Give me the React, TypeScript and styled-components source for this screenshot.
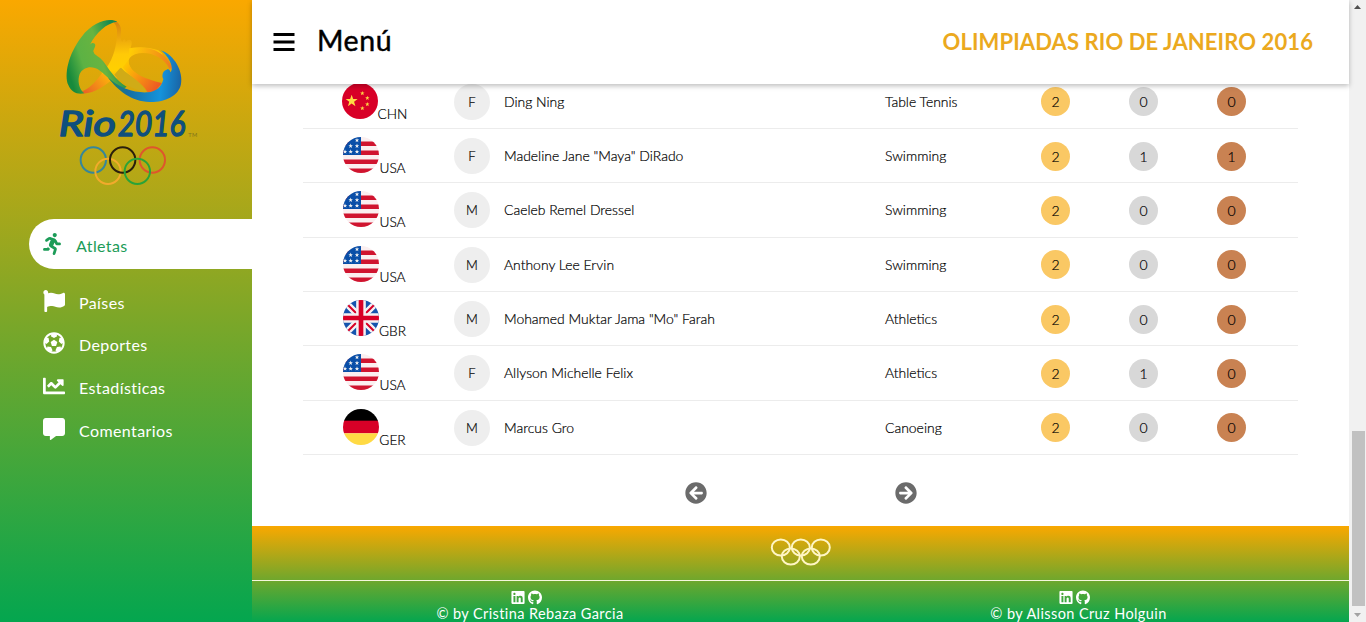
import React from "react";
import styled, { createGlobalStyle, css } from "styled-components";
import {
  FaRunning,
  FaFlag,
  FaFutbol,
  FaChartLine,
  FaCommentAlt,
  FaArrowCircleLeft,
  FaArrowCircleRight,
  FaLinkedin,
  FaGithub,
} from "react-icons/fa";

const GlobalStyle = createGlobalStyle`
  * { box-sizing: border-box; }
  body {
    margin: 0;
    overflow: hidden;
    background: #fff;
    font-family: Lato, "Open Sans", sans-serif;
  }
`;

const Page = styled.div`
  display: flex;
  width: 1366px;
  height: 622px;
  overflow: hidden;
`;

const Sidebar = styled.aside`
  flex: 0 0 252px;
  background: linear-gradient(#faa800, #04a64f);
`;

const LogoBox = styled.div`
  height: 219px;
  padding: 5px 0 0 40px;
`;

const NavList = styled.nav`
  display: flex;
  flex-direction: column;
`;

const NavItem = styled.a<{ $active?: boolean }>`
  display: flex;
  align-items: center;
  height: 42.6px;
  padding-left: 43px;
  color: #fff;
  font-size: 16px;
  letter-spacing: 0.4px;

  svg {
    width: 22px;
    height: 22px;
    margin-right: 14px;
  }

  span {
    padding-top: 3px;
  }

  ${(p) =>
    p.$active &&
    css`
      height: 50px;
      margin: 0 0 10.6px 29px;
      padding-left: 14px;
      border-radius: 25px 0 0 25px;
      background: #fff;
      color: #1c9c58;

      svg {
        width: 18px;
        margin-right: 15px;
      }
    `}
`;

const Main = styled.div`
  flex: 1;
  display: flex;
  flex-direction: column;
  min-width: 0;
`;

const Header = styled.header`
  position: relative;
  z-index: 1;
  flex: 0 0 84px;
  display: flex;
  align-items: center;
  padding: 0 36px 0 21px;
  background: #fff;
  box-shadow: 0 2px 5px rgba(0, 0, 0, 0.26);
`;

const MenuTitle = styled.h1`
  flex: 1;
  margin: 0 0 5px 22px;
  font-size: 28.5px;
  font-weight: 400;
  line-height: 36px;
  letter-spacing: 0.6px;
  color: #000;
  -webkit-text-stroke: 0.45px #000;
`;

const EventTitle = styled.h2`
  margin: 0 0 2px;
  font-size: 22px;
  font-weight: 700;
  letter-spacing: 0.1px;
  color: #eba91e;
`;

const Table = styled.div`
  flex: 0 0 auto;
  margin: -9.35px 51px 0;
`;

const Row = styled.div`
  display: grid;
  grid-template-columns: 143px 52px 1fr 132.5px repeat(3, 88px) 22.5px;
  align-items: center;
  height: 54.33px;
  padding-top: 1px;
  border-bottom: 1px solid #ececec;
  font-size: 14px;
  font-weight: 300;
  color: #000;
  -webkit-text-stroke: 0.2px #000;
`;

const Country = styled.div`
  display: flex;
  justify-content: center;
  align-items: flex-end;
  font-size: 13.7px;

  svg {
    width: 36px;
    height: 36px;
    margin-bottom: 2px;
  }

  span {
    line-height: 17px;
    margin-bottom: -1px;
  }
`;

const Gender = styled.div`
  display: grid;
  place-items: center;
  width: 36px;
  height: 36px;
  margin: 0 auto;
  border-radius: 50%;
  background: #eee;
  font-size: 13px;
`;

const Cell = styled.div`
  padding: 0 0 1px 6px;
  font-size: 13.95px;
  white-space: nowrap;
`;

const medalColors = { gold: "#fac864", silver: "#d8d8d8", bronze: "#c98252" };

const Medal = styled.div<{ $kind: keyof typeof medalColors }>`
  display: grid;
  place-items: center;
  width: 29px;
  height: 29px;
  margin: 0 auto;
  border-radius: 50%;
  background: ${(p) => medalColors[p.$kind]};
  font-size: 14px;
`;

const Pager = styled.div`
  flex: 1;
  display: flex;
  justify-content: center;
  align-items: center;
  gap: 188px;
  padding-top: 5px;
  color: #6b6b6b;

  svg {
    width: 22px;
    height: 22px;
  }
`;

const Footer = styled.footer`
  flex: 0 0 96px;
  overflow: hidden;
  background: linear-gradient(#faa800, #04a64f);
  color: #fff;
`;

const RingsStrip = styled.div`
  height: 55px;
  padding-top: 12px;
  border-bottom: 1px solid #f5f7dc;
  text-align: center;
`;

const Credits = styled.div`
  display: grid;
  grid-template-columns: 556px 1fr;
`;

const Credit = styled.div`
  display: flex;
  flex-direction: column;
  align-items: center;
  padding-top: 9px;
  font-size: 14.5px;
  line-height: 18px;
  letter-spacing: 0.4px;
  white-space: nowrap;
`;

const Social = styled.div`
  display: flex;
  align-items: center;
  gap: 3px;
  height: 15px;
  margin-right: 8px;

  svg {
    width: 14px;
    height: 15px;
  }
`;

const Scrollbar = styled.div`
  flex: 0 0 17px;
  display: flex;
  flex-direction: column;
  align-items: center;
  justify-content: space-between;
  background: #f1f1f1;
`;

const Thumb = styled.div`
  width: 13px;
  height: 175px;
  margin: auto 0 0 1px;
  background: #c1c1c1;
`;

const ScrollArrow = styled.svg`
  display: block;
  width: 17px;
  height: 16px;
`;

function RioLogo() {
  return (
    <svg width="180" height="190" viewBox="0 0 540 570">
      <defs>
        <linearGradient id="leaf" x1="85" y1="200" x2="240" y2="150" gradientUnits="userSpaceOnUse">
          <stop offset="0" stopColor="#178a3c" />
          <stop offset="0.3" stopColor="#5cb244" />
          <stop offset="0.65" stopColor="#68b440" />
          <stop offset="1" stopColor="#188b50" />
        </linearGradient>
        <linearGradient id="sun" x1="240" y1="50" x2="245" y2="245" gradientUnits="userSpaceOnUse">
          <stop offset="0" stopColor="#d98410" />
          <stop offset="0.5" stopColor="#ffc907" />
          <stop offset="0.75" stopColor="#ffd000" />
          <stop offset="1" stopColor="#f48a20" />
        </linearGradient>
        <linearGradient id="flame" x1="250" y1="180" x2="350" y2="250" gradientUnits="userSpaceOnUse">
          <stop offset="0" stopColor="#ffc800" />
          <stop offset="1" stopColor="#ee5a24" />
        </linearGradient>
        <linearGradient id="tail" x1="135" y1="265" x2="215" y2="200" gradientUnits="userSpaceOnUse">
          <stop offset="0" stopColor="#ea6325" />
          <stop offset="1" stopColor="#ffc107" />
        </linearGradient>
        <linearGradient id="arc" x1="275" y1="130" x2="395" y2="170" gradientUnits="userSpaceOnUse">
          <stop offset="0" stopColor="#ffcb05" />
          <stop offset="1" stopColor="#ef7d1d" />
        </linearGradient>
        <linearGradient id="sea" x1="200" y1="210" x2="420" y2="230" gradientUnits="userSpaceOnUse">
          <stop offset="0" stopColor="#238f4f" />
          <stop offset="0.3" stopColor="#176da0" />
          <stop offset="0.75" stopColor="#1493dc" />
          <stop offset="1" stopColor="#1a67a8" />
        </linearGradient>
      </defs>
      <path fill="url(#tail)" d="M120 262C150 250 165 232 187 203L220 222C195 240 170 264 128 266Z" />
      <path
        fill="url(#sun)"
        d="M205 45C232 42 244 60 243 78C242 92 240 101 247 111C250 100 258 100 257 112C266 99 277 105 275 116L272 129C300 125 330 127 355 136L370 149C330 133 275 137 266 166C264 180 271 194 288 206L300 222L240 222C222 216 200 210 184 204C216 181 233 120 231 76C229 57 222 50 205 45Z"
      />
      <path fill="#d0ab17" d="M223 209C232 198 238 190 243 188C260 205 278 216 290 222L322 261C285 256 245 235 223 209Z" />
      <path fill="url(#flame)" d="M265 165C268 205 315 222 366 234L345 260L322 261C310 235 264 212 248 187Z" />
      <path fill="url(#arc)" d="M268 130C320 122 375 134 398 190L388 191C369 146 297 128 266 160Z" />
      <path
        fill="url(#leaf)"
        d="M232 50C207 37 160 50 125 95C84 148 72 211 85 240C93 261 111 269 133 265C116 253 112 225 119 207C130 184 158 181 177 195C203 214 225 244 249 253L260 245C229 229 204 188 189 168C178 154 163 151 161 141C158 137 165 130 166 120C165 113 155 111 150 119C168 82 200 54 232 50Z"
      />
      <path
        fill="url(#sea)"
        d="M362 136C405 150 430 202 423 237C416 274 373 292 329 291C274 290 234 257 203 217C239 250 282 264 322 262C350 261 366 243 370 222C364 211 369 196 380 194C386 190 391 196 391 202C403 194 390 156 362 136Z"
      />
      <g
        fontFamily="Lato"
        fontWeight="400"
        fontStyle="italic"
        fontSize="106"
        fill="#0f4f7c"
        stroke="#0f4f7c"
        strokeWidth="4.5"
        strokeLinejoin="round"
      >
        <text x="56" y="392" textLength="172" lengthAdjust="spacingAndGlyphs">
          Rio
        </text>
        <text x="233" y="392" textLength="203" lengthAdjust="spacingAndGlyphs">
          2016
        </text>
      </g>
      <text x="445" y="397" fontFamily="Lato" fontSize="17" fill="#80751c" textLength="27">
        TM
      </text>
      <g fill="none" strokeWidth="6">
        <circle cx="160" cy="465" r="38" stroke="#36869a" />
        <circle cx="337" cy="465" r="38" stroke="#de562c" />
        <circle cx="204" cy="499" r="38" stroke="#f2aa2c" />
        <circle cx="248" cy="465" r="38" stroke="#2a1f0c" />
        <circle cx="292" cy="499" r="38" stroke="#2aa338" />
      </g>
    </svg>
  );
}

const STAR = "M0-10L2.4-3.2L9.5-3.1L3.8 1.2L5.9 8.1L0 4L-5.9 8.1L-3.8 1.2L-9.5-3.1L-2.4-3.2Z";

function FlagIcon({ code }: { code: string }) {
  const clip = React.useId();
  return (
    <svg viewBox="0 0 108 108">
      <clipPath id={clip}>
        <circle cx="54" cy="54" r="54" />
      </clipPath>
      <g clipPath={`url(#${clip})`}>
        {code === "CHN" && (
          <>
            <rect width="108" height="108" fill="#d80027" />
            <path d={STAR} fill="#ffda44" transform="translate(29 54) scale(1.9)" />
            {[
              [61, 31],
              [76, 45],
              [76, 64],
              [61, 76],
            ].map(([x, y]) => (
              <path key={`${x}-${y}`} d={STAR} fill="#ffda44" transform={`translate(${x} ${y}) scale(.7)`} />
            ))}
          </>
        )}
        {code === "USA" && (
          <>
            <rect width="108" height="108" fill="#fbeff0" />
            {[13.5, 40.5, 67.5, 94.5].map((y) => (
              <rect key={y} y={y} width="108" height="13.5" fill="#d0142f" />
            ))}
            <rect width="54" height="54" fill="#0a4fa8" />
            {[
              [42, 10],
              [23, 27],
              [42, 27],
              [6, 44],
              [23, 44],
              [42, 44],
            ].map(([x, y]) => (
              <path key={`${x}-${y}`} d={STAR} fill="#f0f0f0" transform={`translate(${x} ${y}) scale(.72)`} />
            ))}
          </>
        )}
        {code === "GBR" && (
          <>
            <rect width="108" height="108" fill="#1554ae" />
            <path d="M0 0L108 108M108 0L0 108" stroke="#f5f0f2" strokeWidth="20" />
            <path d="M0 0L108 108M108 0L0 108" stroke="#d80027" strokeWidth="6" />
            <path d="M54 0V108M0 54H108" stroke="#f5f0f2" strokeWidth="29" />
            <path d="M54 0V108M0 54H108" stroke="#d80027" strokeWidth="14" />
          </>
        )}
        {code === "GER" && (
          <>
            <rect width="108" height="36" fill="#000" />
            <rect y="35" width="108" height="38" fill="#d80027" />
            <rect y="73" width="108" height="35" fill="#ffda44" />
          </>
        )}
      </g>
    </svg>
  );
}

function FooterRings() {
  return (
    <svg width="62" height="29" viewBox="0 0 62 29" fill="none" stroke="#fff6c4" strokeWidth="2">
      <ellipse cx="10.8" cy="9.5" rx="9" ry="8" />
      <ellipse cx="30.8" cy="9.5" rx="9" ry="8" />
      <ellipse cx="50.8" cy="9.5" rx="9" ry="8" />
      <ellipse cx="20.8" cy="18.5" rx="9" ry="8" />
      <ellipse cx="40.8" cy="18.5" rx="9" ry="8" />
    </svg>
  );
}

const athletes = [
  { code: "CHN", gender: "F", name: "Ding Ning", sport: "Table Tennis", medals: [2, 0, 0] },
  { code: "USA", gender: "F", name: 'Madeline Jane "Maya" DiRado', sport: "Swimming", medals: [2, 1, 1] },
  { code: "USA", gender: "M", name: "Caeleb Remel Dressel", sport: "Swimming", medals: [2, 0, 0] },
  { code: "USA", gender: "M", name: "Anthony Lee Ervin", sport: "Swimming", medals: [2, 0, 0] },
  { code: "GBR", gender: "M", name: 'Mohamed Muktar Jama "Mo" Farah', sport: "Athletics", medals: [2, 0, 0] },
  { code: "USA", gender: "F", name: "Allyson Michelle Felix", sport: "Athletics", medals: [2, 1, 0] },
  { code: "GER", gender: "M", name: "Marcus Gro", sport: "Canoeing", medals: [2, 0, 0] },
];

const authors = ["Cristina Rebaza Garcia", "Alisson Cruz Holguin"];

export default function App() {
  return (
    <Page>
      <GlobalStyle />
      <Sidebar>
        <LogoBox>
          <RioLogo />
        </LogoBox>
        <NavList>
          <NavItem $active>
            <FaRunning />
            <span>Atletas</span>
          </NavItem>
          <NavItem>
            <FaFlag />
            <span>Países</span>
          </NavItem>
          <NavItem>
            <FaFutbol />
            <span>Deportes</span>
          </NavItem>
          <NavItem>
            <FaChartLine />
            <span>Estadísticas</span>
          </NavItem>
          <NavItem>
            <FaCommentAlt />
            <span>Comentarios</span>
          </NavItem>
        </NavList>
      </Sidebar>
      <Main>
        <Header>
          <svg width="22" height="20" viewBox="0 0 22 20">
            <path d="M0.5 2.5H21.5M0.5 10H21.5M0.5 17.5H21.5" stroke="#000" strokeWidth="2.8" />
          </svg>
          <MenuTitle>Menú</MenuTitle>
          <EventTitle>OLIMPIADAS RIO DE JANEIRO 2016</EventTitle>
        </Header>
        <Table>
          {athletes.map((a) => (
            <Row key={a.name}>
              <Country>
                <FlagIcon code={a.code} />
                <span>{a.code}</span>
              </Country>
              <Gender>{a.gender}</Gender>
              <Cell>{a.name}</Cell>
              <Cell>{a.sport}</Cell>
              <Medal $kind="gold">{a.medals[0]}</Medal>
              <Medal $kind="silver">{a.medals[1]}</Medal>
              <Medal $kind="bronze">{a.medals[2]}</Medal>
            </Row>
          ))}
        </Table>
        <Pager>
          <FaArrowCircleLeft />
          <FaArrowCircleRight />
        </Pager>
        <Footer>
          <RingsStrip>
            <FooterRings />
          </RingsStrip>
          <Credits>
            {authors.map((author) => (
              <Credit key={author}>
                <Social>
                  <FaLinkedin />
                  <FaGithub />
                </Social>
                © by {author}
              </Credit>
            ))}
          </Credits>
        </Footer>
      </Main>
      <Scrollbar>
        <ScrollArrow viewBox="0 0 17 16">
          <path d="M5 9L8.5 5L12 9Z" fill="#505050" />
        </ScrollArrow>
        <Thumb />
        <ScrollArrow viewBox="0 0 17 16">
          <path d="M5 7L8.5 11L12 7Z" fill="#a3a3a3" />
        </ScrollArrow>
      </Scrollbar>
    </Page>
  );
}
